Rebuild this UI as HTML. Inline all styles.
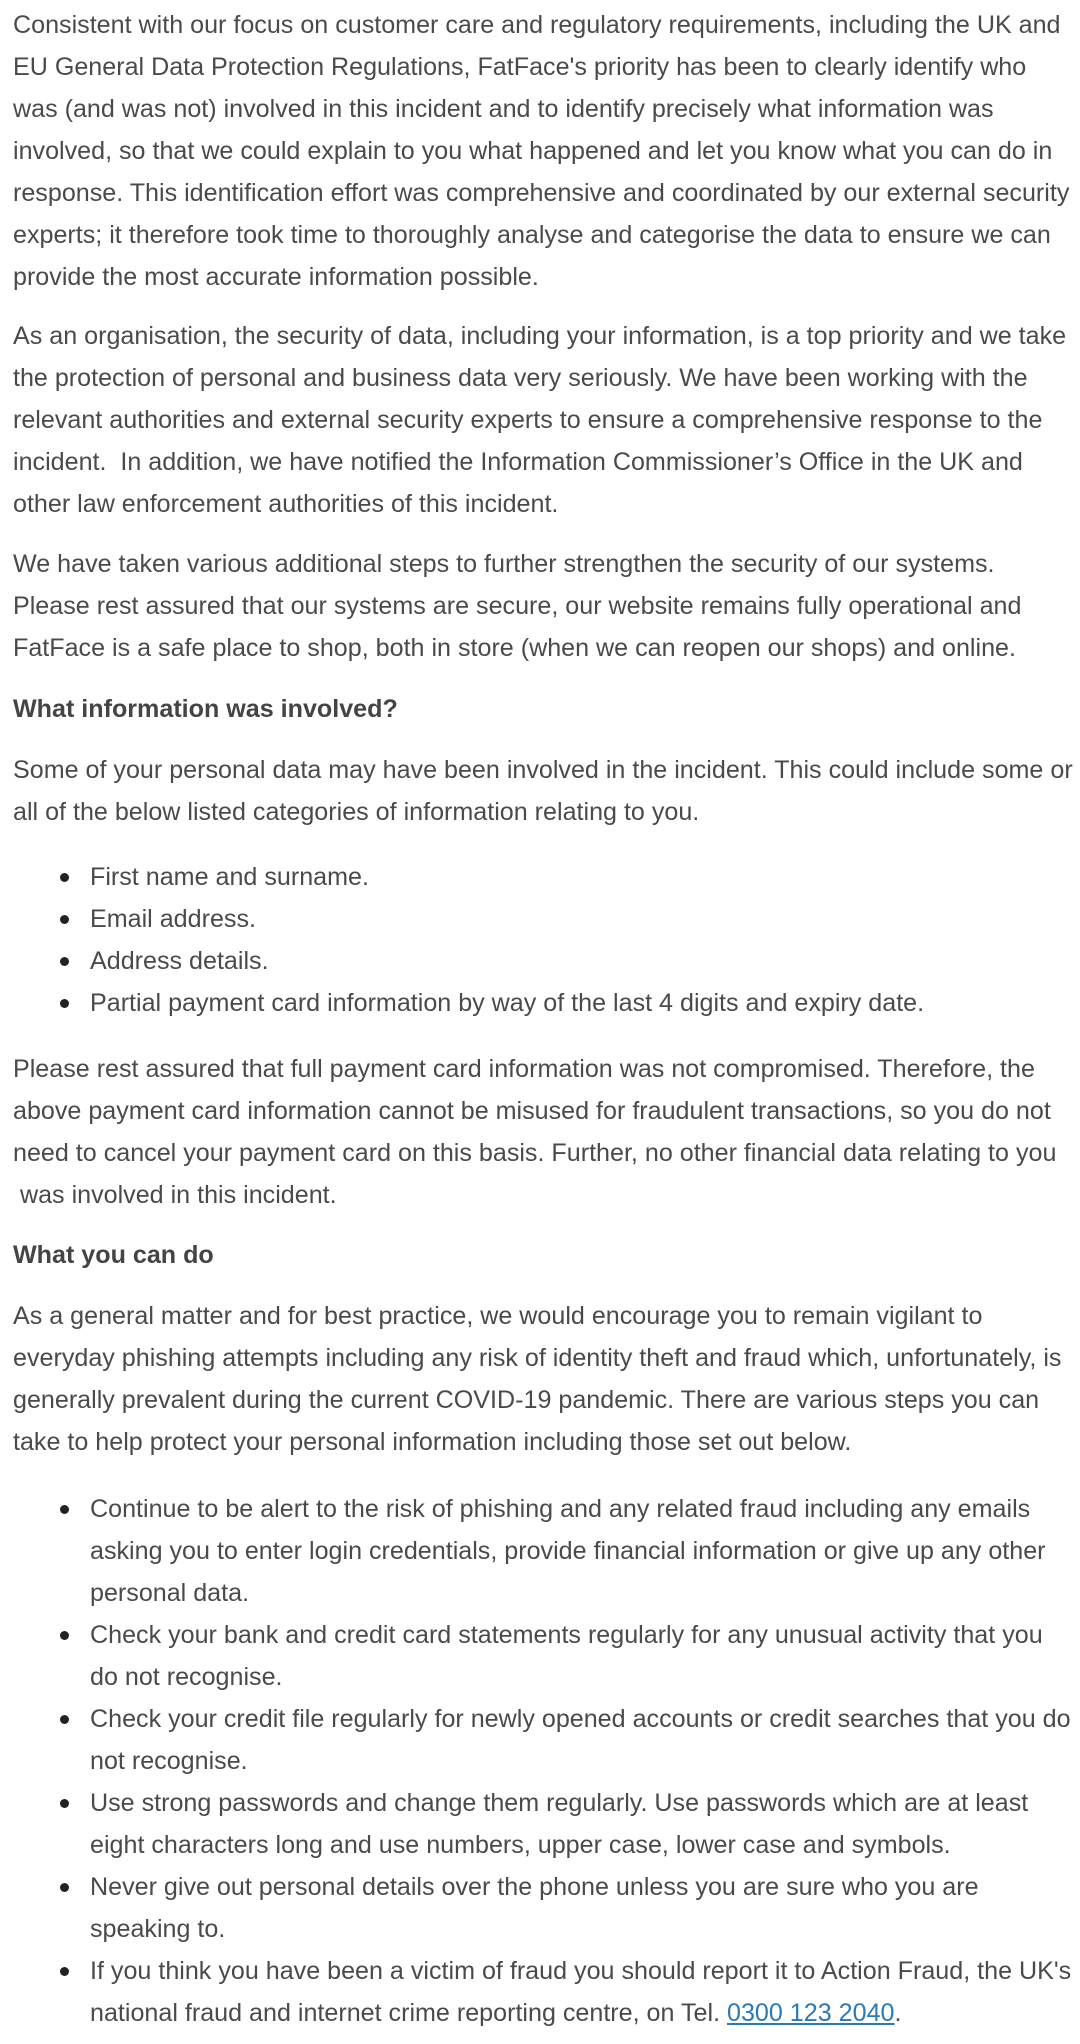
<!DOCTYPE html>
<html><head><meta charset="utf-8"><style>
body{margin:0;background:#fff;width:1080px;height:2044px;position:relative;overflow:hidden;font-family:"Liberation Sans",Arial,sans-serif;font-size:25.1px;color:#4a4a4a}
.b{position:absolute;left:13px;line-height:42px;white-space:pre}
.h{font-weight:bold;color:#444}
ul{position:absolute;left:0;margin:0;padding:0;list-style:none;line-height:42px}
li{position:relative;padding-left:90px;white-space:pre}
li:before{content:"";position:absolute;left:60px;top:17px;width:9px;height:9px;border-radius:50%;background:#222}
a{color:#2a7ab8;text-decoration:underline}
</style></head><body>
<div class="b" style="top:4px">Consistent with our focus on customer care and regulatory requirements, including the UK and
EU General Data Protection Regulations, FatFace's priority has been to clearly identify who
was (and was not) involved in this incident and to identify precisely what information was
involved, so that we could explain to you what happened and let you know what you can do in
response. This identification effort was comprehensive and coordinated by our external security
experts; it therefore took time to thoroughly analyse and categorise the data to ensure we can
provide the most accurate information possible.</div>
<div class="b" style="top:315px">As an organisation, the security of data, including your information, is a top priority and we take
the protection of personal and business data very seriously. We have been working with the
relevant authorities and external security experts to ensure a comprehensive response to the
incident.  In addition, we have notified the Information Commissioner’s Office in the UK and
other law enforcement authorities of this incident.</div>
<div class="b" style="top:543px">We have taken various additional steps to further strengthen the security of our systems.
Please rest assured that our systems are secure, our website remains fully operational and
FatFace is a safe place to shop, both in store (when we can reopen our shops) and online.</div>
<div class="b h" style="top:688px">What information was involved?</div>
<div class="b" style="top:749px">Some of your personal data may have been involved in the incident. This could include some or
all of the below listed categories of information relating to you.</div>
<ul style="top:856px"><li>First name and surname.</li><li>Email address.</li><li>Address details.</li><li>Partial payment card information by way of the last 4 digits and expiry date.</li></ul>
<div class="b" style="top:1048px">Please rest assured that full payment card information was not compromised. Therefore, the
above payment card information cannot be misused for fraudulent transactions, so you do not
need to cancel your payment card on this basis. Further, no other financial data relating to you
 was involved in this incident.</div>
<div class="b h" style="top:1234px">What you can do</div>
<div class="b" style="top:1295px">As a general matter and for best practice, we would encourage you to remain vigilant to
everyday phishing attempts including any risk of identity theft and fraud which, unfortunately, is
generally prevalent during the current COVID-19 pandemic. There are various steps you can
take to help protect your personal information including those set out below.</div>
<ul style="top:1488px"><li>Continue to be alert to the risk of phishing and any related fraud including any emails
asking you to enter login credentials, provide financial information or give up any other
personal data.</li><li>Check your bank and credit card statements regularly for any unusual activity that you
do not recognise.</li><li>Check your credit file regularly for newly opened accounts or credit searches that you do
not recognise.</li><li>Use strong passwords and change them regularly. Use passwords which are at least
eight characters long and use numbers, upper case, lower case and symbols.</li><li>Never give out personal details over the phone unless you are sure who you are
speaking to.</li><li>If you think you have been a victim of fraud you should report it to Action Fraud, the UK's
national fraud and internet crime reporting centre, on Tel. <a>0300 123 2040</a>.</li></ul>
</body></html>
